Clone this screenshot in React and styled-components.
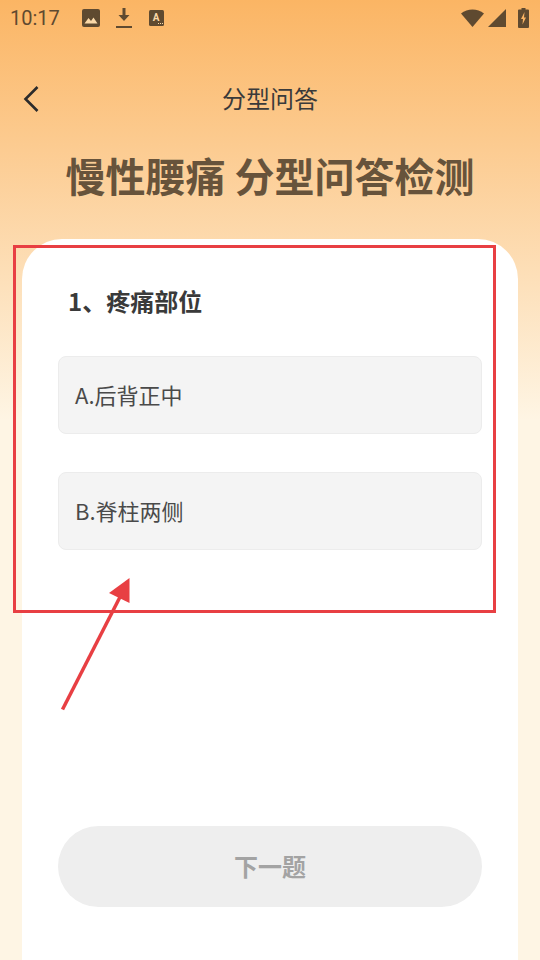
import React from "react";
import styled, { createGlobalStyle } from "styled-components";

const GlobalStyle = createGlobalStyle`
  html, body {
    margin: 0;
    padding: 0;
  }
  body {
    font-family: "Noto Sans CJK SC", "Noto Sans", sans-serif;
  }
`;

const Page = styled.div`
  position: relative;
  width: 540px;
  height: 960px;
  overflow: hidden;
  display: flex;
  flex-direction: column;
  background: linear-gradient(180deg, #fbb564 0, #fef5e4 420px, #fef5e4 100%);
`;

const StatusBar = styled.div`
  height: 36px;
  display: flex;
  align-items: center;
  justify-content: space-between;
  padding: 0 10px;
  color: #5f4a30;
`;

const StatusLeft = styled.div`
  display: flex;
  align-items: center;
  gap: 16px;
`;

const StatusRight = styled.div`
  display: flex;
  align-items: center;
  gap: 4px;
  padding-right: 1px;
`;

const Time = styled.span`
  font-family: Roboto, sans-serif;
  font-size: 20px;
  width: 56px;
`;

const NavBar = styled.div`
  position: relative;
  box-sizing: border-box;
  height: 60px;
  margin-top: 32px;
  padding-bottom: 2px;
  display: flex;
  align-items: center;
  justify-content: center;
  font-size: 24px;
  color: #3a3a3a;
`;

const BackButton = styled.svg`
  position: absolute;
  left: 22px;
  top: 17px;
`;

const Title = styled.h1`
  margin: 15px 0 0;
  height: 64px;
  text-align: center;
  font-size: 40px;
  line-height: 64px;
  font-weight: 700;
  color: #67533b;
`;

const Card = styled.div`
  flex: 1;
  margin: 32px 22px 0;
  padding: 41px 36px 0;
  background: #ffffff;
  border-radius: 40px 40px 0 0;
  display: flex;
  flex-direction: column;
`;

const Question = styled.div`
  padding-left: 10px;
  height: 42px;
  font-size: 24px;
  line-height: 42px;
  font-weight: 700;
  color: #3a3a3a;
`;

const Options = styled.div`
  margin-top: 34px;
  display: flex;
  flex-direction: column;
  gap: 38px;
`;

const Option = styled.div`
  box-sizing: border-box;
  height: 78px;
  padding: 0 16px 2px;
  display: flex;
  align-items: center;
  background: #f4f4f4;
  border: 1px solid #ececec;
  border-radius: 8px;
  font-size: 22px;
  color: #4a4a4a;
`;

const NextButton = styled.div`
  box-sizing: border-box;
  margin-top: 276px;
  height: 81px;
  padding-bottom: 2px;
  border-radius: 41px;
  background: #eeeeee;
  display: flex;
  align-items: center;
  justify-content: center;
  font-size: 24px;
  font-weight: 700;
  color: #a3a3a3;
`;

const Highlight = styled.div`
  position: absolute;
  box-sizing: border-box;
  left: 13px;
  top: 245px;
  width: 483px;
  height: 368px;
  border: 3px solid #e83f43;
`;

const Arrow = styled.svg`
  position: absolute;
  left: 55px;
  top: 570px;
`;

const App = () => {
  return (
    <Page>
      <GlobalStyle />
      <StatusBar>
        <StatusLeft>
          <Time>10:17</Time>
          <svg width="18" height="18" viewBox="0 0 18 18">
            <rect width="18" height="18" rx="2" fill="#5f4a30" />
            <path d="M2.5 14.5 L6.5 9 L9 12 L11.5 8.5 L15.5 14.5 Z" fill="#fbd9a8" />
          </svg>
          <svg width="16" height="22" viewBox="0 0 16 22">
            <path d="M6.5 1 H9.5 V8 H13.5 L8 14 L2.5 8 H6.5 Z" fill="#5f4a30" />
            <rect y="19" width="16" height="2" fill="#5f4a30" />
          </svg>
          <svg width="16" height="18" viewBox="0 0 16 18">
            <rect x="1" width="15" height="16" y="1" rx="1.5" fill="#5f4a30" />
            <text x="8" y="12" fontFamily="Roboto, sans-serif" fontWeight="700" fontSize="10" textAnchor="middle" fill="#fbd9a8">A</text>
            <path d="M10 14.5 H11 M12 14.5 H13 M14 14.5 H15" stroke="#fbd9a8" strokeWidth="1" />
          </svg>
        </StatusLeft>
        <StatusRight>
          <svg width="23" height="18" viewBox="0 0 23 18">
            <path d="M0 4.5 C6.5 -0.8 16.5 -0.8 23 4.5 L11.5 18 Z" fill="#5f4a30" />
          </svg>
          <svg width="18" height="18" viewBox="0 0 18 18">
            <path d="M18 0 V18 H0 Z" fill="#5f4a30" />
          </svg>
          <svg width="11" height="20" viewBox="0 0 11 20" style={{ marginLeft: "8px" }}>
            <path d="M3.5 0 H7.5 V1.5 H10 Q11 1.5 11 2.5 V19 Q11 20 10 20 H1 Q0 20 0 19 V2.5 Q0 1.5 1 1.5 H3.5 Z" fill="#5f4a30" />
            <path d="M6.5 4 L3 11 H5 L4.5 16.5 L8 9.5 H6 Z" fill="#fbb564" />
          </svg>
        </StatusRight>
      </StatusBar>
      <NavBar>
        <BackButton width="20" height="28" viewBox="0 0 20 28">
          <path d="M15.5 2 L3.5 14 L15.5 26" fill="none" stroke="#2b2b2b" strokeWidth="2.6" />
        </BackButton>
        分型问答
      </NavBar>
      <Title>慢性腰痛 分型问答检测</Title>
      <Card>
        <Question>1、疼痛部位</Question>
        <Options>
          <Option>A.后背正中</Option>
          <Option>B.脊柱两侧</Option>
        </Options>
        <NextButton>下一题</NextButton>
      </Card>
      <Highlight />
      <Arrow width="80" height="145" viewBox="0 0 80 145">
        <path d="M7.5 139.5 L65 27" stroke="#e83f43" strokeWidth="3.5" fill="none" />
        <path d="M74.5 8 L54 23 L74.5 33 Z" fill="#e83f43" />
      </Arrow>
    </Page>
  );
};

export default App;
